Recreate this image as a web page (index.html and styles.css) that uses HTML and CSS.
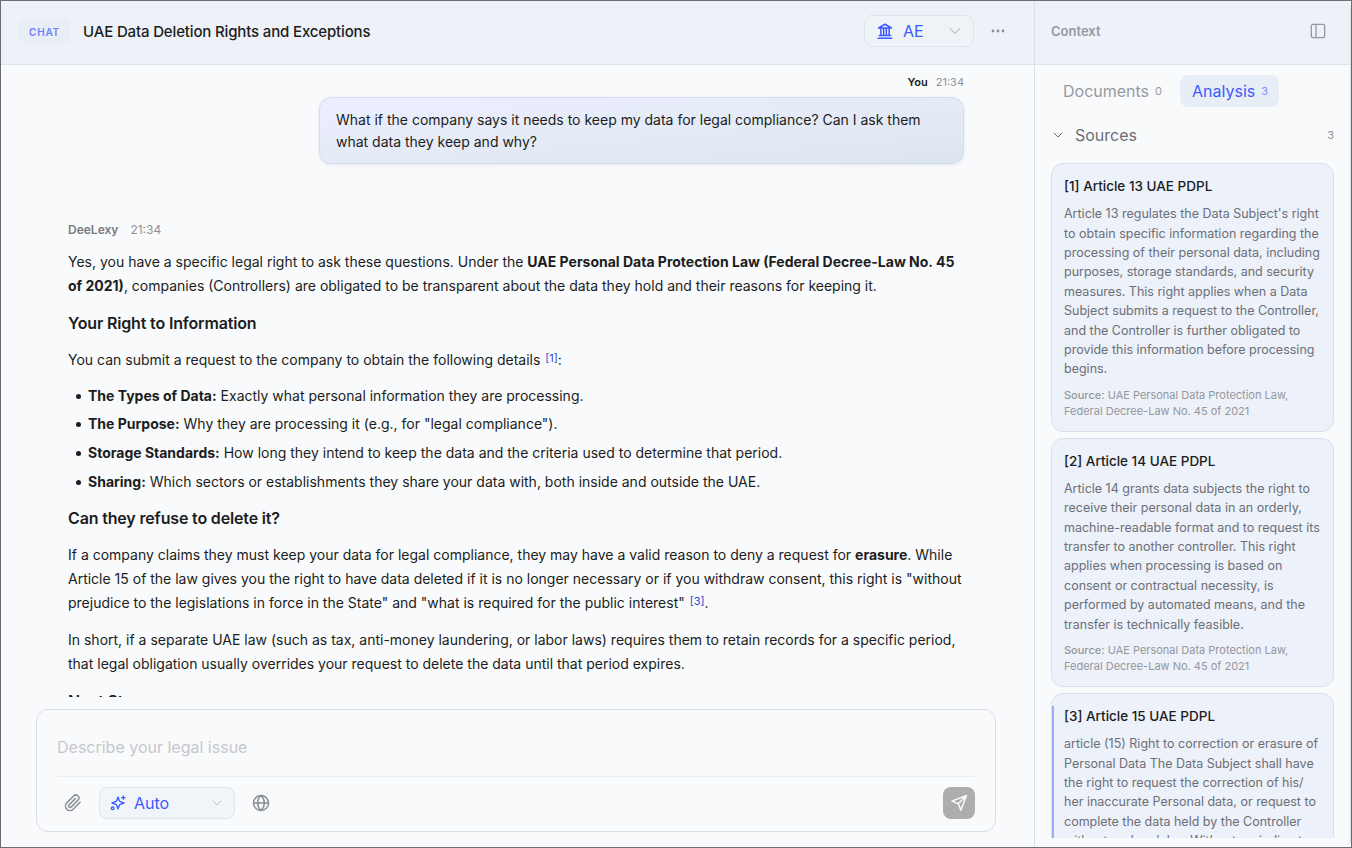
FILE: index.html
```html
<!DOCTYPE html>
<html lang="en">
<head>
    <meta charset="UTF-8">
    <meta name="viewport" content="width=device-width, initial-scale=1.0">
    <title>DeeLexy</title>
    <link rel="stylesheet" href="styles.css">
</head>
<body>
    <div class="app">
        <main class="chat">
            <header class="topbar">
                <span class="badge">CHAT</span>
                <h1 class="title">UAE Data Deletion Rights and Exceptions</h1>
                <button class="select region">
                    <svg class="icon" width="18" height="18" viewBox="0 0 24 24"><path d="M3 21.500h18M4.500 18h15M3.500 8h17L12 3zM6.500 9v9M10.200 9v9M13.800 9v9M17.500 9v9"/></svg>
                    <span>AE</span>
                    <svg class="icon chevron" width="14" height="14" viewBox="0 0 24 24"><path d="M4 8l8 8 8-8"/></svg>
                </button>
                <button class="more">
                    <svg width="16" height="16" viewBox="0 0 16 16"><circle cx="3" cy="8" r="1.4"/><circle cx="8" cy="8" r="1.4"/><circle cx="13" cy="8" r="1.4"/></svg>
                </button>
            </header>
            <section class="messages">
                <div class="meta meta-user"><b>You</b><time>21:34</time></div>
                <div class="bubble">What if the company says it needs to keep my data for legal compliance? Can I ask them what data they keep and why?</div>
                <div class="meta meta-bot"><b>DeeLexy</b><time>21:34</time></div>
                <div class="answer">
                    <p>Yes, you have a specific legal right to ask these questions. Under the <strong>UAE Personal Data Protection Law (Federal Decree-Law No. 45 of 2021)</strong>, companies (Controllers) are obligated to be transparent about the data they hold and their reasons for keeping it.</p>
                    <h3>Your Right to Information</h3>
                    <p>You can submit a request to the company to obtain the following details <a class="cite">[1]</a>:</p>
                    <ul>
                        <li><strong>The Types of Data:</strong> Exactly what personal information they are processing.</li>
                        <li><strong>The Purpose:</strong> Why they are processing it (e.g., for "legal compliance").</li>
                        <li><strong>Storage Standards:</strong> How long they intend to keep the data and the criteria used to determine that period.</li>
                        <li><strong>Sharing:</strong> Which sectors or establishments they share your data with, both inside and outside the UAE.</li>
                    </ul>
                    <h3>Can they refuse to delete it?</h3>
                    <p>If a company claims they must keep your data for legal compliance, they may have a valid reason to deny a request for <strong>erasure</strong>. While Article 15 of the law gives you the right to have data deleted if it is no longer necessary or if you withdraw consent, this right is "without prejudice to the legislations in force in the State" and "what is required for the public interest" <a class="cite">[3]</a>.</p>
                    <p>In short, if a separate UAE law (such as tax, anti-money laundering, or labor laws) requires them to retain records for a specific period, that legal obligation usually overrides your request to delete the data until that period expires.</p>
                    <h3>Next Steps</h3>
                </div>
            </section>
            <div class="composer">
                <div class="placeholder">Describe your legal issue</div>
                <div class="tools">
                    <button class="tool">
                        <svg class="icon" width="18" height="18" viewBox="0 0 24 24"><path d="M21.4 11.1l-9.2 9.2a6 6 0 0 1-8.5-8.5l9.2-9.2a4 4 0 0 1 5.7 5.7l-9.2 9.2a2 2 0 0 1-2.8-2.8l8.5-8.5"/></svg>
                    </button>
                    <button class="select model">
                        <svg class="icon" width="16" height="16" viewBox="0 0 24 24"><path d="M12 3l2 5.500a2.500 2.500 0 0 0 1.500 1.500L21 12l-5.500 2a2.500 2.500 0 0 0-1.500 1.500L12 21l-2-5.500A2.500 2.500 0 0 0 8.500 14L3 12l5.500-2A2.500 2.500 0 0 0 10 8.500zM20 1.500v5M17.500 4h5"/><circle cx="4" cy="20" r="2"/></svg>
                        <span>Auto</span>
                        <svg class="icon chevron" width="12" height="12" viewBox="0 0 24 24"><path d="M4 8l8 8 8-8"/></svg>
                    </button>
                    <button class="tool">
                        <svg class="icon" width="18" height="18" viewBox="0 0 24 24"><circle cx="12" cy="12" r="10"/><path d="M2 12h20M12 2c6 5.500 6 14.500 0 20M12 2c-6 5.500-6 14.500 0 20"/></svg>
                    </button>
                    <button class="send">
                        <svg class="icon" width="18" height="18" viewBox="0 0 24 24"><path d="M22 2L2.500 9.500l8.500 3.500 3.500 8.500zM22 2L11 13"/></svg>
                    </button>
                </div>
            </div>
        </main>
        <aside class="context">
            <header class="context-head">
                <h2>Context</h2>
                <svg class="icon" width="16" height="16" viewBox="0 0 24 24"><rect x="2" y="2" width="20" height="20" rx="3"/><path d="M9 2v20"/></svg>
            </header>
            <nav class="tabs">
                <button class="tab">Documents <small>0</small></button>
                <button class="tab active">Analysis <small>3</small></button>
            </nav>
            <div class="group">
                <svg class="icon" width="12" height="12" viewBox="0 0 24 24"><path d="M4 8l8 8 8-8"/></svg>
                <span>Sources</span>
                <small>3</small>
            </div>
            <div class="cards">
                <article class="card">
                    <h4>[1] Article 13 UAE PDPL</h4>
                    <p>Article 13 regulates the Data Subject's right to obtain specific information regarding the processing of their personal data, including purposes, storage standards, and security measures. This right applies when a Data Subject submits a request to the Controller, and the Controller is further obligated to provide this information before processing begins.</p>
                    <footer><b>Source:</b> UAE Personal Data Protection Law, Federal Decree-Law No. 45 of 2021</footer>
                </article>
                <article class="card">
                    <h4>[2] Article 14 UAE PDPL</h4>
                    <p>Article 14 grants data subjects the right to receive their personal data in an orderly, machine-readable format and to request its transfer to another controller. This right applies when processing is based on consent or contractual necessity, is performed by automated means, and the transfer is technically feasible.</p>
                    <footer><b>Source:</b> UAE Personal Data Protection Law, Federal Decree-Law No. 45 of 2021</footer>
                </article>
                <article class="card current">
                    <h4>[3] Article 15 UAE PDPL</h4>
                    <p>article (15) Right to correction or erasure of Personal Data The Data Subject shall have the right to request the correction of his/<wbr>her inaccurate Personal data, or request to complete the data held by the Controller without undue delay. Without prejudice to</p>
                </article>
            </div>
        </aside>
    </div>
</body>
</html>
```
FILE: styles.css
```css
*{
    box-sizing: border-box;
    margin: 0;
    padding: 0;
}
body{
    font-family: Inter, "Liberation Sans", sans-serif;
    font-size: 14px;
    color: #1b1d21;
    background-color: #f9fafc;
}
button{
    font: inherit;
    color: inherit;
    border: none;
    background: none;
}
.icon{
    flex: none;
    fill: none;
    stroke: currentColor;
    stroke-width: 2;
    stroke-linecap: round;
    stroke-linejoin: round;
}
.app{
    display: flex;
    height: 848px;
    border: 1px solid #6b6c70;
    overflow: hidden;
}
.chat{
    display: flex;
    flex-direction: column;
    width: 1033px;
}

/* top bar */
.topbar{
    display: flex;
    align-items: center;
    flex: none;
    height: 64px;
    padding: 0 20px 4px 17px;
    background-color: #eef1f7;
    border-bottom: 1px solid #dfe3ea;
}
.badge{
    width: 53px;
    height: 24px;
    padding-top: 1px;
    line-height: 24px;
    text-align: center;
    font-size: 10px;
    font-weight: 600;
    letter-spacing: 0.8px;
    color: #6d80fa;
    background-color: #e7eef5;
    border-radius: 8px;
}
.title{
    flex: 1;
    margin-left: 12px;
    padding-top: 2px;
    font-size: 15px;
    font-weight: 500;
    letter-spacing: -0.15px;
}
.select{
    display: flex;
    align-items: center;
    height: 32px;
    font-size: 16px;
    color: #3d5afe;
    background-color: #f0f5fa;
    border: 1px solid #dfe5ec;
    border-radius: 8px;
}
.chevron{
    margin-left: auto;
    color: #bcc0c7;
}
.region{
    width: 110px;
    padding: 0 11px;
    gap: 9px;
    background-color: #eef3f8;
}
.more{
    width: 32px;
    height: 32px;
    margin-left: 8px;
    display: flex;
    align-items: center;
    justify-content: center;
    fill: #8b8e94;
}

/* messages */
.messages{
    display: flex;
    flex-direction: column;
    height: 632px;
    padding: 9px 70px 0 67px;
    overflow: hidden;
}
.meta{
    display: flex;
    height: 16px;
    line-height: 16px;
    font-size: 12px;
    color: #8f9298;
}
.meta b{
    font-weight: 600;
}
.meta-user{
    justify-content: flex-end;
    gap: 8px;
    font-size: 11px;
}
.meta-user b{
    color: #1b1d21;
}
.bubble{
    flex: none;
    align-self: flex-end;
    width: 645px;
    height: 67px;
    margin-top: 7px;
    padding: 11px 16px;
    line-height: 22px;
    background: linear-gradient(175deg, #edefff, #dce6ef);
    border: 1px solid #d3dcf3;
    border-radius: 12px;
    box-shadow: 0 1px 3px rgba(40, 60, 120, 0.1);
}
.meta-bot{
    gap: 12px;
    margin-top: 58px;
}
.meta-bot b{
    color: #777a80;
}
.answer{
    margin-top: 12px;
    line-height: 24px;
}
.answer p{
    margin-bottom: 13px;
}
.answer h3{
    margin-bottom: 13px;
    font-size: 16px;
    line-height: 24px;
    font-weight: 600;
    letter-spacing: -0.16px;
}
.answer ul{
    margin: -1.4px 0 12.4px;
    list-style: none;
}
.answer li{
    display: flex;
    align-items: center;
    line-height: 23.8px;
    margin-bottom: 4.9px;
    white-space: pre-wrap;
}
.answer li::before{
    content: "";
    width: 5px;
    height: 5px;
    margin: 1px 7px 0 8px;
    border-radius: 50%;
    background-color: #1b1d21;
}
.answer strong{
    font-weight: 700;
}
.cite{
    margin-left: 1px;
    font-size: 11px;
    line-height: 0;
    vertical-align: 3px;
    color: #3348cf;
}

/* composer */
.composer{
    width: 960px;
    height: 123px;
    margin: 12px 0 0 35px;
    padding: 0 20px;
    border: 1px solid #d9dde3;
    border-radius: 12px;
}
.placeholder{
    height: 67px;
    padding-top: 27px;
    line-height: 20px;
    font-size: 16px;
    color: #c5c8cd;
    border-bottom: 1px solid #e9ecf0;
}
.tools{
    display: flex;
    align-items: center;
    gap: 10px;
    padding-top: 10px;
}
.tool{
    display: flex;
    align-items: center;
    justify-content: center;
    width: 32px;
    height: 32px;
    color: #8b8e94;
}
.model{
    width: 136px;
    padding: 0 11px 0 10px;
    gap: 8px;
}
.send{
    display: flex;
    align-items: center;
    justify-content: center;
    width: 32px;
    height: 32px;
    margin-left: auto;
    color: #f9fafc;
    background-color: #acadaf;
    border-radius: 8px;
}

/* context panel */
.context{
    display: flex;
    flex-direction: column;
    flex: 1;
    height: 846px;
    padding-bottom: 8px;
    border: 1px solid #d9dde5;
    border-width: 0 1px 1px;
    border-bottom-color: transparent;
    border-radius: 0 8px 8px 0;
    overflow: hidden;
}
.context-head{
    display: flex;
    align-items: center;
    justify-content: space-between;
    flex: none;
    height: 64px;
    padding: 0 24px 4px 16px;
    color: #96999f;
    background-color: #eef1f7;
    border-bottom: 1px solid #dfe3ea;
}
.context-head h2{
    font-size: 13px;
    font-weight: 600;
}
.tabs{
    display: flex;
    gap: 6px;
    padding: 10px 16px 0;
}
.tab{
    display: flex;
    align-items: center;
    height: 32px;
    padding: 0 12px;
    gap: 6px;
    font-size: 16px;
    color: #96999f;
    border-radius: 8px;
}
.tab small, .group small{
    font-size: 11px;
}
.tab.active{
    width: 99px;
    color: #3d5afe;
    background-color: #e7eef5;
}
.tab.active small{
    color: #7f91fb;
}
.group{
    display: flex;
    align-items: center;
    height: 32px;
    margin: 13px 16px 12.2px;
    padding-left: 1px;
    font-size: 16px;
    color: #6c6f76;
}
.group span{
    margin-left: 11px;
}
.group small{
    margin-left: auto;
    color: #8b8e94;
}
.cards{
    display: flex;
    flex-direction: column;
    gap: 6px;
    padding: 0 16px;
    min-height: 0;
    overflow: hidden;
}
.card{
    flex: none;
    padding: 12px 12px 11.1px;
    background-color: #edf1fa;
    border: 1px solid #dae0e9;
    border-radius: 12px;
}
.card h4{
    margin-bottom: 8px;
    line-height: 1.5;
    font-size: 13.5px;
    font-weight: 500;
}
.card p{
    font-size: 12.5px;
    line-height: 1.55;
    color: #6c6f76;
}
.card footer{
    margin-top: 9px;
    font-size: 11px;
    line-height: 1.45;
    color: #94979d;
}
.card footer b{
    font-weight: 500;
}
.current{
    position: relative;
}
.current::before{
    content: "";
    position: absolute;
    left: 0;
    top: 12px;
    bottom: 12px;
    width: 2px;
    background-color: #9eabff;
}
```
